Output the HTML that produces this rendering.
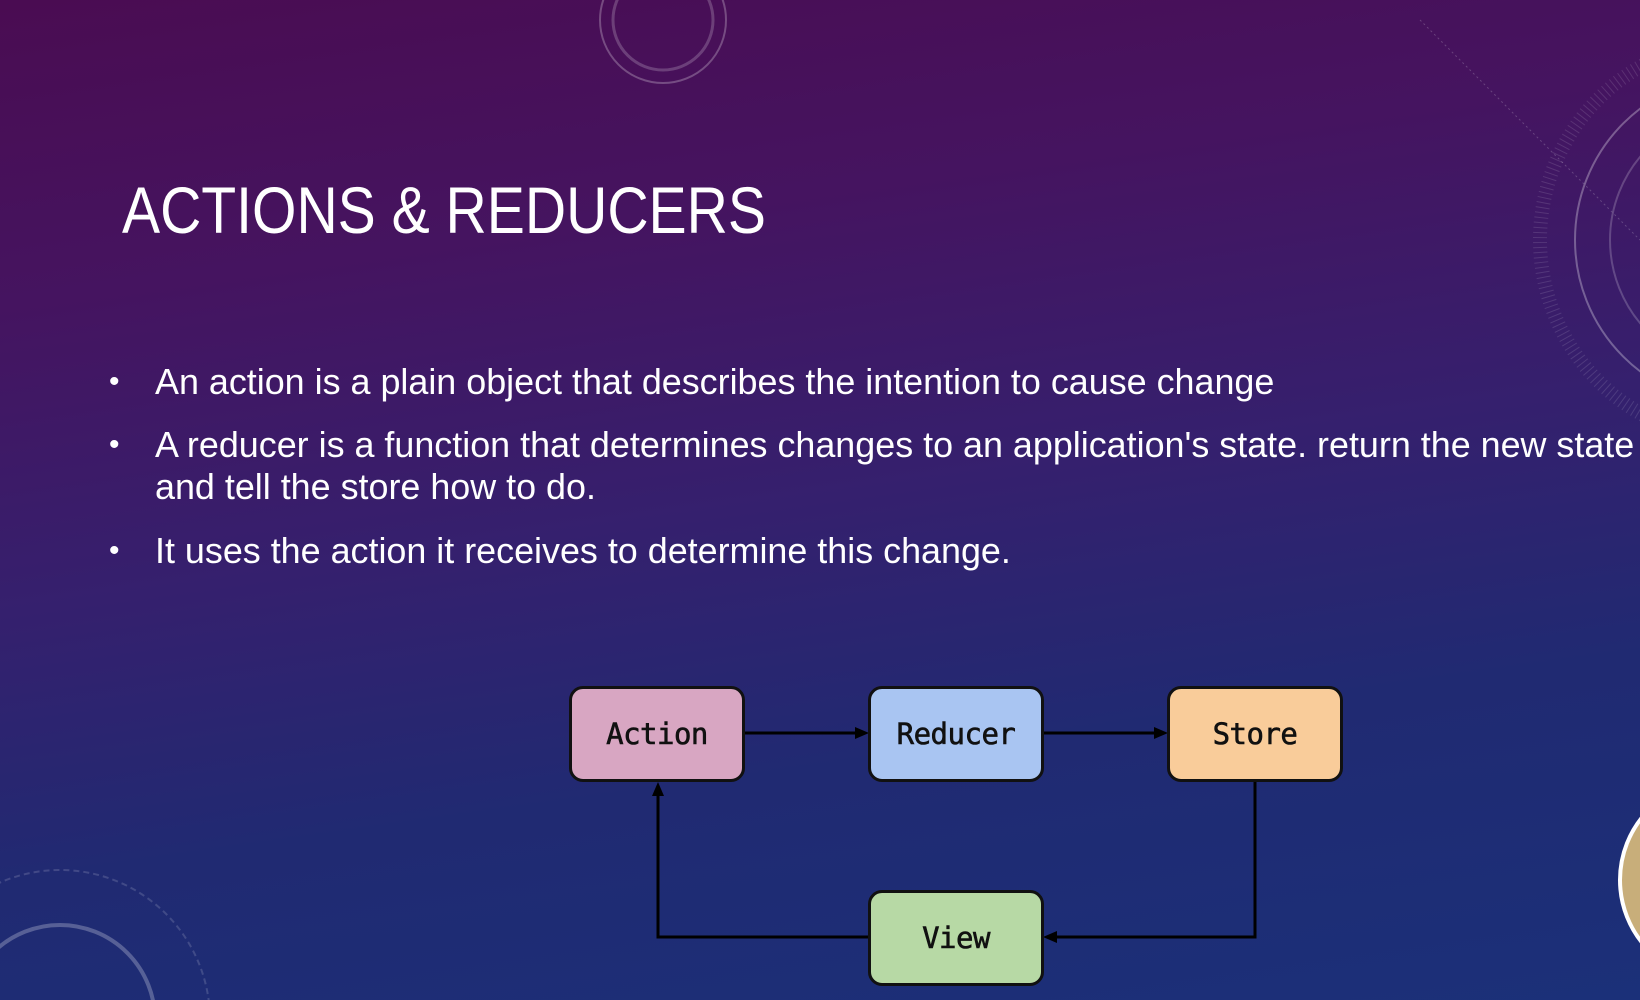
<!DOCTYPE html>
<html style="overflow:hidden;width:1640px;height:1000px"><head><style>
body{margin:0;width:1640px;height:1000px;overflow:hidden;position:relative;
background:linear-gradient(172deg,#4a0c52 0%,#451460 25%,#35206e 50%,#202a72 72%,#1b3079 100%);
font-family:"Liberation Sans",sans-serif;color:#fff}
.t{position:absolute;left:122px;top:172px;font-size:66px;font-weight:normal;transform:scaleX(0.865);transform-origin:left;white-space:nowrap}
.b{position:absolute;left:155px;font-size:35.9px;white-space:nowrap}
.b:before{content:"•";position:absolute;left:-46px;font-size:30px;top:3px}
.nb:before{content:none}
.box{position:absolute;width:176px;height:96px;border:3px solid #111;border-radius:14px;box-sizing:border-box;
display:flex;align-items:center;justify-content:center;font-family:"DejaVu Sans Mono","Liberation Mono",monospace;font-size:29px;color:#111;-webkit-text-stroke:0.6px #111;letter-spacing:-0.5px}
</style></head><body>
<svg width="1640" height="1000" style="position:absolute;left:0;top:0" fill="none">
<circle cx="663" cy="20" r="63" stroke="rgba(255,255,255,0.25)" stroke-width="2"/>
<circle cx="663" cy="20" r="50" stroke="rgba(255,255,255,0.2)" stroke-width="3"/>
<circle cx="1740" cy="240" r="165" stroke="rgba(255,255,255,0.3)" stroke-width="2"/>
<circle cx="1740" cy="240" r="130" stroke="rgba(255,255,255,0.2)" stroke-width="2"/>
<circle cx="1740" cy="240" r="200" stroke="rgba(255,255,255,0.12)" stroke-width="14" stroke-dasharray="1 4"/>
<line x1="1420" y1="20" x2="1640" y2="240" stroke="rgba(255,255,255,0.2)" stroke-dasharray="2 3"/>
<circle cx="60" cy="1020" r="95" stroke="rgba(255,255,255,0.25)" stroke-width="4"/>
<circle cx="60" cy="1020" r="150" stroke="rgba(255,255,255,0.15)" stroke-width="2" stroke-dasharray="6 4"/>
<circle cx="1720" cy="880" r="100" fill="#c8ae7a" stroke="#fff" stroke-width="4"/>
<g stroke="#000" stroke-width="3">
<line x1="745" y1="733" x2="860" y2="733"/><line x1="1043" y1="733" x2="1158" y2="733"/>
<polyline points="1255,782 1255,937 1053,937"/>
<polyline points="869,937 658,937 658,792"/>
</g>
<g fill="#000">
<polygon points="869,733 855,727 855,739"/><polygon points="1168,733 1154,727 1154,739"/>
<polygon points="1043,937 1057,931 1057,943"/><polygon points="658,782 652,796 664,796"/>
</g>
</svg>
<div class="t">ACTIONS &amp; REDUCERS</div>
<div class="b" style="top:362px">An action is a plain object that describes the intention to cause change</div>
<div class="b" style="top:425px">A reducer is a function that determines changes to an application's state. return the new state</div>
<div class="b nb" style="top:467px">and tell the store how to do.</div>
<div class="b" style="top:531px">It uses the action it receives to determine this change.</div>
<div class="box" style="left:569px;top:686px;background:#d8a6c2">Action</div>
<div class="box" style="left:868px;top:686px;background:#a9c5f2">Reducer</div>
<div class="box" style="left:1167px;top:686px;background:#f9cc9a">Store</div>
<div class="box" style="left:868px;top:890px;background:#b7d9a5">View</div>
</body></html>
